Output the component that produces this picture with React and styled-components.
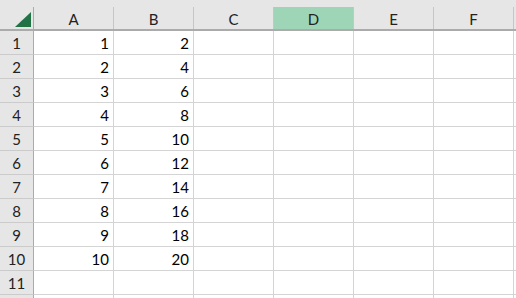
import styled, { createGlobalStyle } from "styled-components";

const Global = createGlobalStyle`
    html, body {
        margin: 0;
        padding: 0;
        background: #ffffff;
        overflow: hidden;
    }
    body {
        font-family: Lato, "Open Sans", "Liberation Sans", sans-serif;
    }
`

const Sheet = styled.div`
    width: 516px;
    height: 298px;
    overflow: hidden;
    display: flex;
    flex-direction: column;
`

const HeaderRow = styled.div`
    display: flex;
    flex: none;
    padding-top: 7px;
    background: #e6e6e6;
    border-bottom: 2px solid #ababab;
`

const Corner = styled.div`
    flex: none;
    width: 34px;
    height: 22px;
    box-sizing: border-box;
    border-right: 1px solid #ababab;
    display: flex;
    align-items: flex-end;
    justify-content: flex-end;
    padding: 0 2px 2px 0;
`

const ColHead = styled.div`
    flex: none;
    width: 80px;
    height: 22px;
    box-sizing: border-box;
    border-right: 1px solid #c6c6c6;
    background: ${p => (p.$selected ? "#9fd5b7" : "transparent")};
    color: #222;
    font-size: 15px;
    display: flex;
    align-items: center;
    justify-content: center;
    padding-top: 1px;
`

const Row = styled.div`
    display: flex;
    flex: none;
    height: 24px;
`

const RowHead = styled.div`
    flex: none;
    width: 34px;
    box-sizing: border-box;
    background: #e6e6e6;
    border-right: 1px solid #ababab;
    border-bottom: 1px solid #cbcbcb;
    color: #222;
    font-size: 15px;
    display: flex;
    align-items: center;
    justify-content: center;
    padding-top: 1px;
`

const Cell = styled.div`
    flex: none;
    width: 80px;
    box-sizing: border-box;
    border-right: 1px solid #d4d4d4;
    border-bottom: 1px solid #d4d4d4;
    color: #000;
    font-size: 15px;
    display: flex;
    align-items: center;
    justify-content: flex-end;
    padding: 1px 4px 0 0;
`

const columns = ["A", "B", "C", "D", "E", "F", "G"]

const data = [1, 2, 3, 4, 5, 6, 7, 8, 9, 10].map(n => [n, n * 2])

const App = () => {
    // row 12 only peeks in at the bottom edge, so it gets no label
    const rows = []
    for (let r = 0; r < 12; r++) {
        const values = data[r] || []
        rows.push(
            <Row key={r}>
                <RowHead>{r < 11 ? r + 1 : ""}</RowHead>
                {columns.map((c, i) => (
                    <Cell key={c}>{values[i] !== undefined ? values[i] : ""}</Cell>
                ))}
            </Row>
        )
    }

    return (
        <Sheet>
            <Global />
            <HeaderRow>
                <Corner>
                    <svg width="16" height="15" viewBox="0 0 16 15">
                        <polygon points="16,0 16,15 0,15" fill="#217346" />
                    </svg>
                </Corner>
                {columns.map(c => (
                    <ColHead key={c} $selected={c === "D"}>{c === "G" ? "" : c}</ColHead>
                ))}
            </HeaderRow>
            {rows}
        </Sheet>
    )
}

export default App;
